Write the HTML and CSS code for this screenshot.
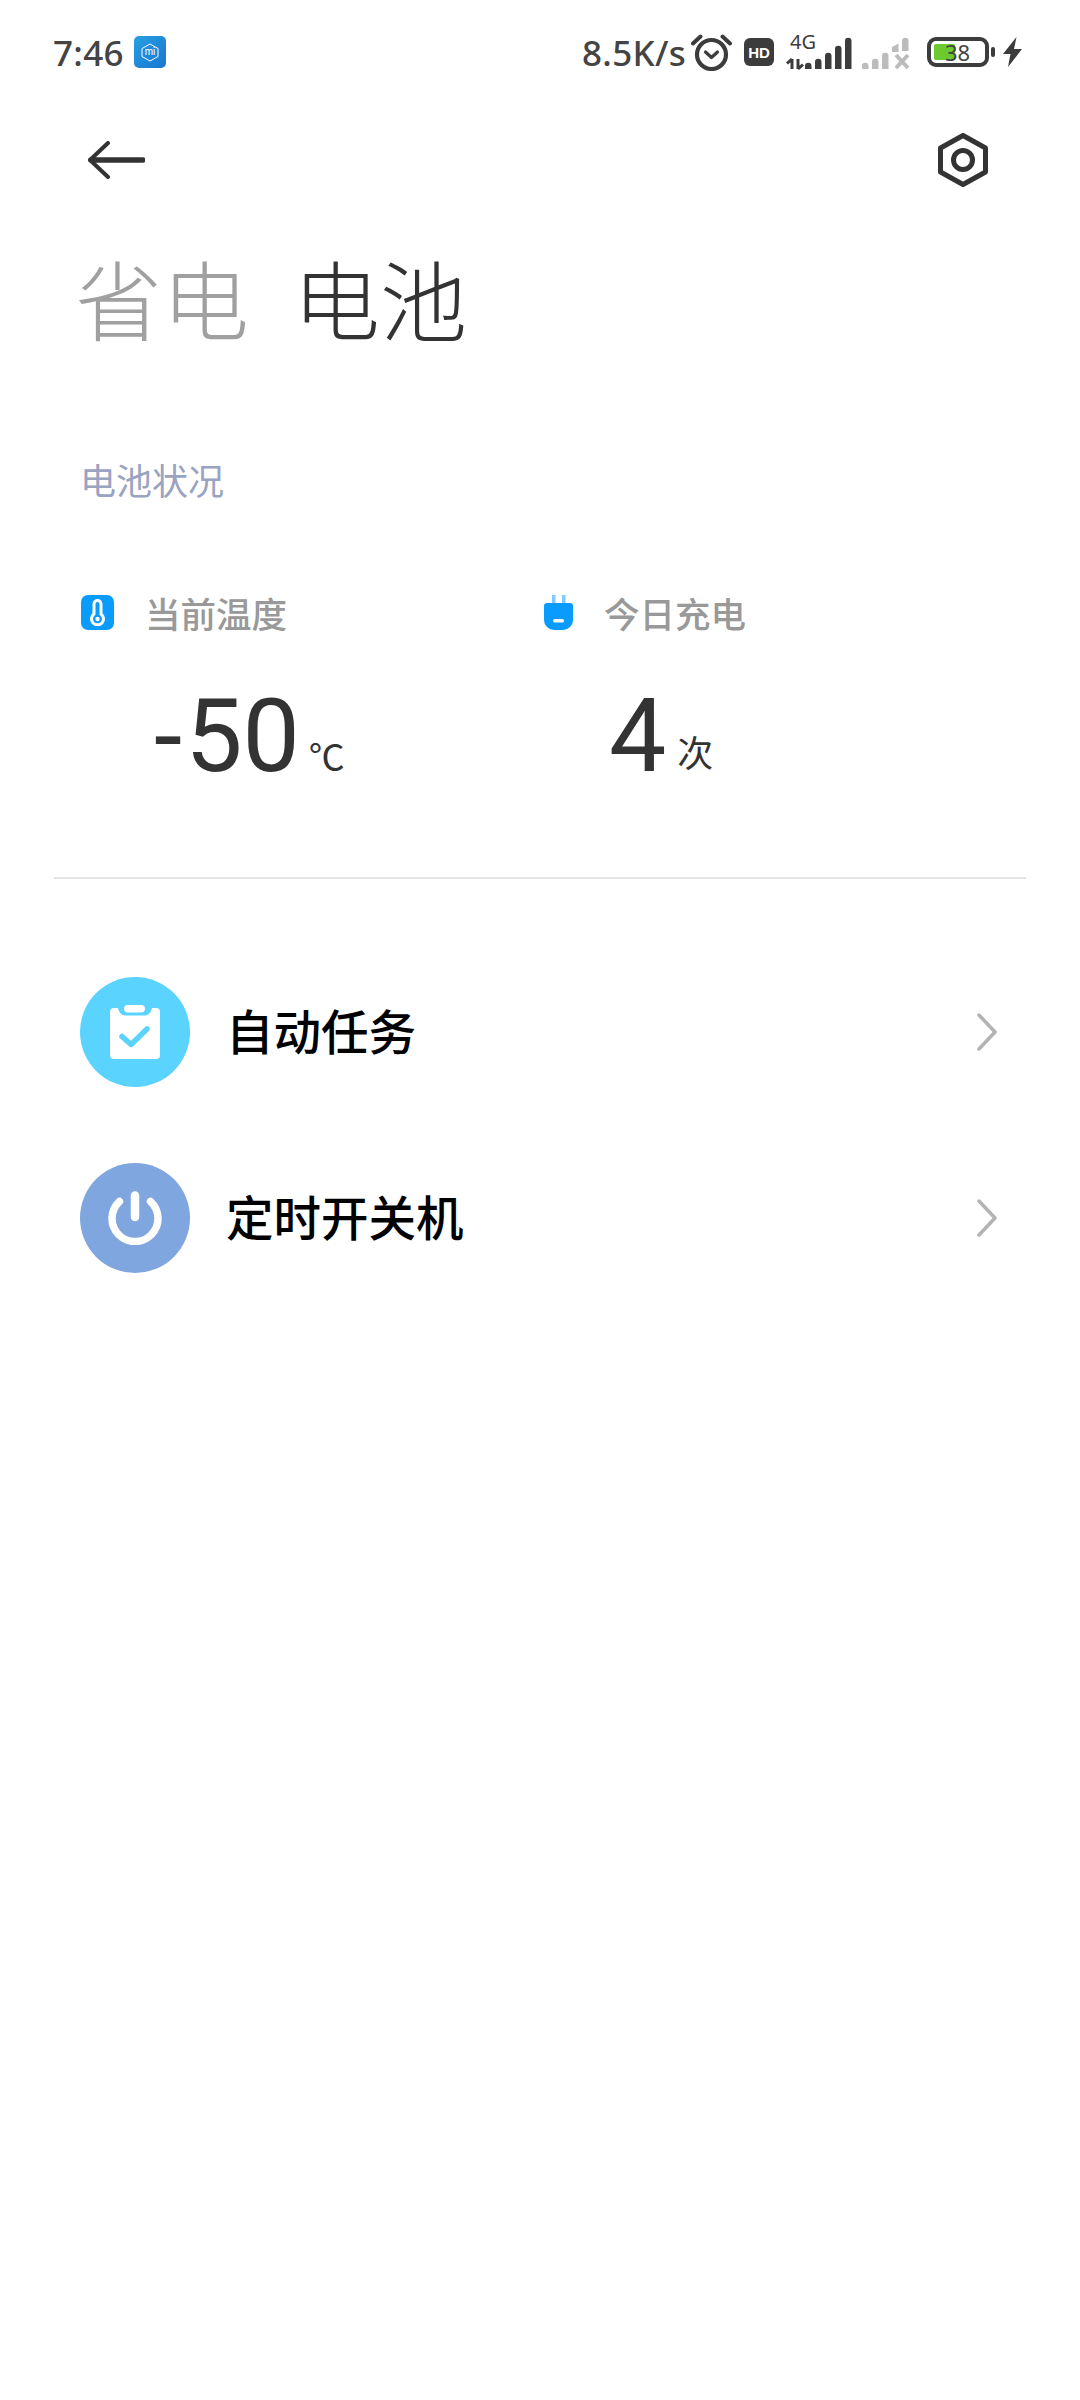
FILE: index.html
```html
<!DOCTYPE html>
<html lang="zh-CN">
<head>
    <meta charset="UTF-8">
    <meta name="viewport" content="width=device-width, initial-scale=1.0">
    <title>电池</title>
    <link rel="stylesheet" href="styles.css">
</head>
<body>
    <div class="status">
        <span class="time">7:46</span>
        <svg class="app-icon" width="32" height="32" viewBox="0 0 32 32">
            <defs>
                <linearGradient id="appBg" x1="0" y1="0" x2="1" y2="1">
                    <stop offset="0" stop-color="#27a0e2"/>
                    <stop offset="1" stop-color="#1976d0"/>
                </linearGradient>
            </defs>
            <rect width="32" height="32" rx="5" fill="url(#appBg)"/>
            <path d="M16 8l8 4.500v8l-8 4.500l-8-4.500v-8z" fill="none" stroke="#fff" stroke-width="1"/>
            <text class="app-mi" x="16" y="19" text-anchor="middle">mi</text>
        </svg>
        <span class="status-gap"></span>
        <span class="speed">8.5K/s</span>
        <svg class="alarm" width="41" height="37" viewBox="0 0 41 37">
            <circle cx="20.500" cy="20.500" r="14.500" fill="none" stroke="#3c3c3c" stroke-width="4.200"/>
            <path d="M14.500 18l6 5.500l6-5.500" fill="none" stroke="#3c3c3c" stroke-width="3.200" stroke-linecap="round" stroke-linejoin="round"/>
            <path d="M2 9.500L9.500 2.500M39 9.500L31.500 2.500" stroke="#3c3c3c" stroke-width="4" stroke-linecap="round"/>
        </svg>
        <span class="hd">HD</span>
        <svg class="signal" width="124" height="57" viewBox="0 -10 124 57">
            <text class="net" x="4" y="15">4G</text>
            <path d="M6 25v10M1 29.500L6 25M12 25v10M17 30.500L12 35" fill="none" stroke="#3c3c3c" stroke-width="3"/>
            <path d="M19 35v-3a3 3 0 0 1 6.500 0v3zM29 35v-7a3 3 0 0 1 6.500 0v7zM39 35v-13a3 3 0 0 1 6.500 0v13zM49 35v-20a3 3 0 0 1 6.500 0v20zM59 35v-28a3 3 0 0 1 6.500 0v28z" fill="#3c3c3c"/>
            <path d="M76 35v-3a3 3 0 0 1 6.500 0v3zM86 35v-7a3 3 0 0 1 6.500 0v7zM96 35v-13a3 3 0 0 1 6.500 0v13zM106 18v-5l6.500-3.500v8.500zM116 17v-10a3 3 0 0 1 6.500 0v10z" fill="#bcbcbc"/>
            <path d="M110 21l12 13M122 21l-12 13" stroke="#bcbcbc" stroke-width="4"/>
        </svg>
        <span class="battery">
            <span class="battery-fill"></span>
            <span class="battery-num">38</span>
        </span>
        <span class="battery-nub"></span>
        <svg class="bolt" width="19" height="30" viewBox="0 0 19 30">
            <path d="M13.500 0L0 17h7.500L5 30L19 12h-8z" fill="#3c3c3c"/>
        </svg>
    </div>

    <div class="topbar">
        <svg width="58" height="38" viewBox="0 0 58 38">
            <path d="M4 19H56" stroke="#333" stroke-width="5.500" stroke-linecap="round"/>
            <path d="M21 2L3 19L21 36" fill="none" stroke="#333" stroke-width="4" stroke-linecap="round" stroke-linejoin="round"/>
        </svg>
        <svg width="50" height="54" viewBox="0 0 50 54">
            <path d="M25 2.500L47.500 15V39L25 51.500L2.500 39V15z" fill="none" stroke="#333" stroke-width="5" stroke-linejoin="round"/>
            <circle cx="25" cy="27" r="9.500" fill="none" stroke="#333" stroke-width="5"/>
        </svg>
    </div>

    <div class="tabs">
        <span class="tab">省电</span>
        <span class="tab tab-active">电池</span>
    </div>

    <div class="section-title">电池状况</div>

    <div class="stats">
        <div class="stat">
            <div class="stat-label">
                <svg width="33" height="35" viewBox="0 0 33 35">
                    <rect width="33" height="35" rx="7" fill="#0a9bff"/>
                    <path d="M13 9a3.500 3.500 0 0 1 7 0v10a6 6 0 1 1-7 0z" fill="none" stroke="#fff" stroke-width="3"/>
                    <circle cx="16.500" cy="24" r="2.200" fill="#fff"/>
                </svg>
                <span>当前温度</span>
            </div>
            <div class="stat-value stat-temp"><span class="num"><span class="minus">-</span>50</span><span class="unit unit-temp">℃</span></div>
        </div>
        <div class="stat">
            <div class="stat-label">
                <svg width="29" height="35" viewBox="0 0 29 35">
                    <path d="M8 0h3.500v9H8zM18 0h3.500v9H18z" fill="#7fcbff"/>
                    <path d="M3 8h23a3 3 0 0 1 3 3v14a10 10 0 0 1-10 10h-9a10 10 0 0 1-10-10V11a3 3 0 0 1 3-3z" fill="#0a9bff"/>
                    <rect x="9" y="24" width="11" height="3.500" rx="1.700" fill="#fff"/>
                </svg>
                <span>今日充电</span>
            </div>
            <div class="stat-value stat-count"><span class="num">4</span><span class="unit"><span class="unit-raise">次</span></span></div>
        </div>
    </div>

    <div class="divider"></div>

    <div class="menu">
        <div class="menu-row">
            <span class="circle circle-task">
                <svg width="50" height="54" viewBox="0 0 50 54">
                    <path d="M4 3h4c1 5 4 7.500 8 7.500h18c4 0 7-2.500 8-7.500h4a4 4 0 0 1 4 4v43a4 4 0 0 1-4 4H4a4 4 0 0 1-4-4V7a4 4 0 0 1 4-4z" fill="#fff"/>
                    <rect x="14" y="0" width="21" height="7.500" rx="3.700" fill="#fff"/>
                    <path d="M12 31.500l9 8L37 24" fill="none" stroke="#5bd3ff" stroke-width="5.500" stroke-linecap="round" stroke-linejoin="round"/>
                </svg>
            </span>
            <span class="menu-text">自动任务</span>
            <svg class="chevron" width="21" height="38" viewBox="0 0 21 38">
                <path d="M3 2L19 19L3 36" fill="none" stroke="#b3b3b3" stroke-width="3.500" stroke-linecap="round" stroke-linejoin="round"/>
            </svg>
        </div>
        <div class="menu-row">
            <span class="circle circle-power">
                <svg width="54" height="54" viewBox="0 0 54 54">
                    <path d="M11.500 10.500a23 23 0 1 0 31 0" fill="none" stroke="#fff" stroke-width="7.500" stroke-linecap="round"/>
                    <path d="M27 4.500V26" stroke="#fff" stroke-width="8.500" stroke-linecap="round"/>
                </svg>
            </span>
            <span class="menu-text">定时开关机</span>
            <svg class="chevron" width="21" height="38" viewBox="0 0 21 38">
                <path d="M3 2L19 19L3 36" fill="none" stroke="#b3b3b3" stroke-width="3.500" stroke-linecap="round" stroke-linejoin="round"/>
            </svg>
        </div>
    </div>
</body>
</html>
```

FILE: styles.css
```css
body {
    margin: 0;
    width: 1080px;
    height: 2400px;
    overflow: hidden;
    background-color: #fff;
    font-family: "Noto Sans CJK SC", "Noto Sans", sans-serif;
}

/* status bar */
.status {
    display: flex;
    align-items: center;
    height: 104px;
    padding-left: 53px;
    box-sizing: border-box;
    color: #444;
}
.time, .speed {
    font-family: "Noto Sans", sans-serif;
    font-size: 35px;
    font-weight: 500;
    letter-spacing: 0.3px;
}
.app-icon {
    margin-left: 10px;
}
.app-mi {
    font-family: "Liberation Sans", sans-serif;
    font-size: 10px;
    fill: #fff;
}
.status-gap {
    flex: 1;
}
.alarm {
    margin-left: 5px;
}
.hd {
    display: flex;
    align-items: center;
    justify-content: center;
    width: 30px;
    height: 28px;
    margin-left: 12px;
    background-color: #3c3c3c;
    border-radius: 6px;
    color: #fff;
    font-family: "Liberation Sans", sans-serif;
    font-size: 15px;
    font-weight: bold;
}
.signal {
    margin-left: 12px;
}
.net {
    font-family: "Noto Sans", sans-serif;
    font-size: 20px;
    fill: #3c3c3c;
}
.battery {
    position: relative;
    width: 62px;
    height: 30px;
    margin-left: 17px;
    border: 4px solid #3c3c3c;
    border-radius: 9px;
    box-sizing: border-box;
}
.battery-fill {
    position: absolute;
    left: 3px;
    top: 3px;
    width: 21px;
    height: 16px;
    border-radius: 2px;
    background-color: #6cc92f;
}
.battery-num {
    position: absolute;
    left: 14px;
    top: 0;
    font-family: "Noto Sans", sans-serif;
    font-size: 22px;
    line-height: 22px;
}
.battery-nub {
    width: 4px;
    height: 10px;
    margin-left: 2px;
    border-radius: 2px;
    background-color: #3c3c3c;
}
.bolt {
    margin-left: 8px;
    margin-right: 58px;
}

/* back / settings */
.topbar {
    display: flex;
    justify-content: space-between;
    align-items: center;
    height: 112px;
    padding: 0 92px 0 87px;
}

.tabs {
    display: flex;
    gap: 44px;
    margin-top: 36px;
    padding-left: 75px;
    font-size: 87px;
    font-weight: 300;
    line-height: 90px;
    color: #a0a0a0;
}
.tab-active {
    color: #333;
}

.section-title {
    margin-top: 115px;
    padding-left: 80px;
    font-size: 36px;
    line-height: 44px;
    color: #9aa3bf;
}

/* temperature / charge count */
.stats {
    display: flex;
    margin-top: 91px;
    padding-left: 81px;
}
.stat {
    width: 463px;
}
.stat-label {
    display: flex;
    align-items: center;
    gap: 31px;
    height: 40px;
    font-size: 35.500px;
    font-weight: 500;
    color: #999;
}
.stat-value {
    display: flex;
    align-items: baseline;
    margin-top: 49px;
    color: #333;
    line-height: 110px;
}
.stat-temp {
    padding-left: 73px;
}
.stat-count {
    padding-left: 65px;
}
.num {
    font-family: Roboto, sans-serif;
    font-size: 102px;
    font-weight: 450;
    font-stretch: 92%;
}
.minus {
    margin-right: 3px;
}
.unit {
    margin-left: 11px;
    font-size: 36px;
}
.unit-temp {
    margin-left: 9px;
}
.unit-raise {
    line-height: 1;
    vertical-align: 4px;
}

.divider {
    height: 2px;
    margin: 67px 54px 0;
    background-color: #e5e5e5;
}

/* menu */
.menu {
    margin-top: 98px;
}
.menu-row {
    display: flex;
    align-items: center;
    height: 110px;
    margin-bottom: 76px;
    padding-left: 80px;
    padding-right: 83px;
}
.circle {
    display: flex;
    align-items: center;
    justify-content: center;
    width: 110px;
    height: 110px;
    border-radius: 50%;
}
.circle-task {
    background-color: #5bd3ff;
}
.circle-power {
    background-color: #7fa6df;
}
.menu-text {
    flex: 1;
    margin-left: 36px;
    padding-bottom: 5px;
    font-size: 47.500px;
    font-weight: 500;
    color: #000;
}
```
